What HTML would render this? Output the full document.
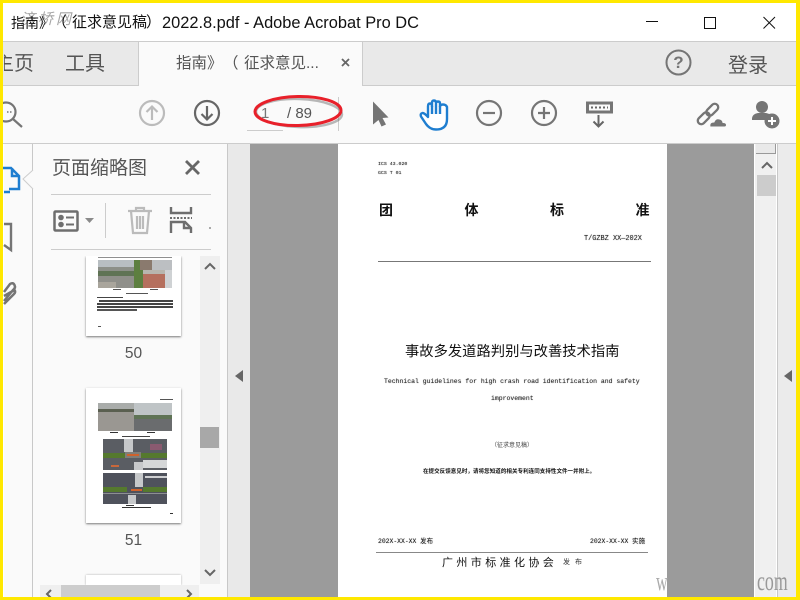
<!DOCTYPE html>
<html><head><meta charset="utf-8"><style>
html,body{margin:0;padding:0}
body{width:800px;height:600px;overflow:hidden;position:relative;background:#fff;font-family:"Liberation Sans","Noto Sans CJK SC",sans-serif}
div,span{position:absolute;white-space:nowrap}
svg{position:absolute;overflow:visible}
.d{font-family:"Liberation Mono","Noto Sans CJK SC",monospace;color:#222;text-shadow:0 0 1px rgba(0,0,0,.35)}
.c{font-family:"Noto Sans CJK SC",sans-serif;color:#111}
.b{background:#111;opacity:.75;height:1px}
</style></head><body>
<div style="left:0;top:41px;width:800px;height:1px;background:#ccc"></div>
<div style="left:0;top:42px;width:800px;height:43px;background:#e9e9e9"></div>
<div style="left:0;top:85px;width:800px;height:1px;background:#ccc"></div>
<div style="left:138px;top:42px;width:225px;height:44px;background:#fafafa;border-left:1px solid #ccc;border-right:1px solid #ccc;box-sizing:border-box"></div>
<div style="left:0;top:86px;width:800px;height:57px;background:#fafafa"></div>
<div style="left:0;top:143px;width:800px;height:1px;background:#ccc"></div>

<div style="left:20px;top:10px;font-size:15px;line-height:20px;color:#888;opacity:.75;letter-spacing:3px;font-style:italic">济桥网</div>
<div style="left:11px;top:13px;font-size:14px;line-height:20px;color:#111">指南》</div>
<div style="left:52px;top:13px;font-size:15px;line-height:20px;color:#111">（</div>
<div style="left:72px;top:13px;font-size:15px;line-height:20px;color:#111">征求意见稿</div>
<div style="left:146px;top:13px;font-size:15px;line-height:20px;color:#111">）</div>
<div style="left:162px;top:13px;font-size:16.400px;line-height:20px;color:#111">2022.8.pdf - Adobe Acrobat Pro DC</div>
<svg style="left:640px;top:10px" width="150" height="30" fill="none" stroke="#111" stroke-width="1"><path d="M6 11.500H18M64.500 7.500H75.500V18.500H64.500ZM123.500 7L135 18.500M135 7L123.500 18.500"/></svg>

<div style="left:4px;top:51px;width:30px;overflow:hidden;font-size:20px;line-height:26px;color:#555"><span style="position:static;margin-left:-10px">主页</span></div>
<div style="left:65px;top:51px;font-size:20px;line-height:26px;color:#555">工具</div>
<div style="left:176px;top:52px;font-size:15.500px;line-height:24px;color:#555">指南》</div>
<div style="left:223px;top:52px;font-size:15.500px;line-height:24px;color:#555">（</div>
<div style="left:244px;top:52px;font-size:15.500px;line-height:24px;color:#555">征求意见...</div>
<svg style="left:341px;top:58px" width="10" height="10" stroke="#666" stroke-width="1.800"><path d="M1 1L8 8M8 1L1 8"/></svg>
<svg style="left:665px;top:49px" width="28" height="28" fill="none" stroke="#757575" stroke-width="2"><circle cx="13.500" cy="13.500" r="12"/></svg>
<div style="left:665px;top:50px;width:27px;text-align:center;font-size:17px;font-weight:bold;color:#757575;line-height:26px">?</div>
<div style="left:728px;top:53px;font-size:20px;line-height:26px;color:#555">登录</div>

<!-- toolbar -->
<svg style="left:4px;top:100px" width="20" height="30" fill="none" stroke="#757575" stroke-width="2.200"><circle cx="2" cy="12" r="9.500"/><path d="M9 19L18 27"/><path d="M3 12H9" stroke-dasharray="1.500 1.500" stroke-width="1.500"/></svg>
<svg style="left:139px;top:100px" width="26" height="26" fill="none" stroke="#bbb" stroke-width="2.200"><circle cx="13" cy="13" r="12"/><path d="M13 20V7M7.500 12L13 6.500L18.500 12"/></svg>
<svg style="left:194px;top:100px" width="26" height="26" fill="none" stroke="#666" stroke-width="2.200"><circle cx="13" cy="13" r="12"/><path d="M13 6V19M7.500 14L13 19.500L18.500 14"/></svg>
<div style="left:247px;top:130px;width:36px;height:1px;background:#ccc"></div>
<div style="left:338px;top:97px;width:1px;height:34px;background:#ccc"></div>
<div style="left:261px;top:105px;font-size:15px;line-height:18px;color:#777">1</div>
<div style="left:287px;top:105px;font-size:15px;line-height:18px;color:#555">/ 89</div>
<svg style="left:0;top:0" width="400" height="140" fill="none"><ellipse cx="299" cy="113" rx="43" ry="14" stroke="#666" stroke-width="2.500" opacity=".45" transform="rotate(2 299 113)"/><ellipse cx="298" cy="111" rx="43" ry="14.500" stroke="#e8202a" stroke-width="3" transform="rotate(-1 298 111)"/></svg>
<svg style="left:370px;top:100px" width="20" height="28" fill="#757575"><path d="M3 1.500L18.500 17.500L12.500 18L16 24.500L11.500 26.500L8.500 20L3 24.500Z"/></svg>
<svg style="left:419px;top:99px" width="30" height="33" fill="#fff" stroke="#1f7ed0" stroke-width="2.400" stroke-linejoin="round"><path d="M9 18V7.500Q9 4.500 11 4.500T13 7.500V4Q13 1.500 15 1.500T17 4V4.500Q17 2.500 19 2.500T21 4.500V7.500Q21 5.500 24 5.500T28 8V20Q28 30.500 17 30.500Q11 30.500 7 25L2 17.500Q1 14.500 3.500 14Q5.500 14 9 18Z"/><path d="M13 7V15M17 5V15M21 7V15" fill="none"/></svg>
<svg style="left:476px;top:100px" width="26" height="26" fill="none" stroke="#757575" stroke-width="2.200"><circle cx="13" cy="13" r="12"/><path d="M7 13H19"/></svg>
<svg style="left:531px;top:100px" width="26" height="26" fill="none" stroke="#757575" stroke-width="2.200"><circle cx="13" cy="13" r="12"/><path d="M7 13H19M13 7V19"/></svg>
<svg style="left:585px;top:100px" width="28" height="28" fill="none"><rect x="2.500" y="3" width="24" height="9" stroke="#757575" stroke-width="3"/><path d="M6 7.500H23" stroke="#666" stroke-width="2" stroke-dasharray="2 2"/><path d="M13.500 15V26.500M8.500 21.500L13.500 26.500L18.500 21.500" stroke="#666" stroke-width="2"/></svg>
<svg style="left:695px;top:101px" width="32" height="28" fill="none" stroke="#757575" stroke-width="2.300"><g transform="rotate(-45 13 13)"><rect x="0" y="9.500" width="14" height="7" rx="3.500"/><rect x="12" y="9.500" width="14" height="7" rx="3.500"/></g><path d="M15 26Q14 21 19 21Q20.500 17 24.500 18Q27.500 18.500 28 21.500Q31.500 21.500 31.500 24Q31.500 26 29.500 26Z" fill="#757575" stroke="#fafafa" stroke-width="1"/></svg>
<svg style="left:751px;top:100px" width="32" height="30" fill="#757575"><circle cx="11" cy="7" r="6"/><path d="M1 19Q1 14 7 13H15Q20 14 21 17Q17 17.500 16 20H1Z"/><circle cx="21" cy="21" r="7.500"/><path d="M17 21H25M21 17V25" stroke="#fff" stroke-width="2"/></svg>

<!-- left rail -->
<div style="left:4px;top:144px;width:28px;height:456px;background:#fafafa"></div>
<div style="left:32px;top:144px;width:1px;height:456px;background:#c8c8c8"></div>
<svg style="left:4px;top:166px" width="14" height="30" fill="none" stroke="#1f7ed0" stroke-width="2.500"><path d="M-2 2H7L15 10V23H5M8 2V10H15"/><path d="M0 26H6" /></svg>
<svg style="left:4px;top:222px" width="14" height="34" fill="none" stroke="#757575" stroke-width="2.400"><path d="M0 2H7V28L0 23"/></svg>
<svg style="left:4px;top:280px" width="14" height="26" fill="none" stroke="#757575" stroke-width="2.500"><path d="M0 12L6 4Q9 2 10.500 5Q12 8 9 10L0 21M0 16L10.500 10Q12 12 10 14L0 24"/></svg>

<!-- panel -->
<div style="left:33px;top:144px;width:194px;height:456px;background:#fafafa"></div>
<svg style="left:22px;top:170px" width="12" height="22" fill="#fafafa" stroke="#ccc"><path d="M11 0L1 9L11 19" /></svg>
<div style="left:227px;top:144px;width:1px;height:456px;background:#c8c8c8"></div>
<div style="left:228px;top:144px;width:22px;height:456px;background:#e9e9e9"></div>
<div style="left:52px;top:156px;font-size:19px;line-height:26px;letter-spacing:0;color:#555">页面缩略图</div>
<svg style="left:184px;top:159px" width="17" height="17" stroke="#666" stroke-width="2.800"><path d="M2 2L15 15M15 2L2 15"/></svg>
<div style="left:51px;top:194px;width:160px;height:1px;background:#ccc"></div>
<div style="left:51px;top:249px;width:160px;height:1px;background:#ccc"></div>
<svg style="left:53px;top:210px" width="26" height="22" fill="none" stroke="#6e6e6e" stroke-width="2.500"><rect x="1.500" y="1.500" width="23" height="19" rx="1"/><circle cx="8" cy="7.500" r="2.800" fill="#6e6e6e" stroke="none"/><circle cx="8" cy="14.500" r="2.800" fill="#6e6e6e" stroke="none"/><path d="M13 7.500H21M13 14.500H21" stroke-width="2"/></svg>
<svg style="left:85px;top:218px" width="9" height="6" fill="#8a8a8a"><path d="M0 0H9L4.500 5Z"/></svg>
<div style="left:105px;top:203px;width:1px;height:35px;background:#ccc"></div>
<svg style="left:127px;top:206px" width="26" height="29" fill="none" stroke="#bbb" stroke-width="2.200"><path d="M1 5H25M9 5V2H17V5M4 5L6 27H20L22 5M10 10V23M13 10V23M16 10V23"/></svg>
<svg style="left:169px;top:207px" width="24" height="27" fill="none" stroke="#6e6e6e" stroke-width="2.400"><path d="M2 0V6H22V0M2 26V15H16L22 21V26"/><path d="M1 11H23" stroke-dasharray="2 1.500" stroke-width="2"/><path d="M15 15V21H22" /></svg>
<div style="left:209px;top:227px;width:2px;height:2px;background:#aaa"></div>

<!-- thumbnail list -->
<div style="left:86px;top:256px;width:95px;height:80px;background:#fff;box-shadow:0 1px 2px #777"></div>
<div style="left:80px;top:250px;width:106px;height:6px;background:#fafafa"></div>
<div style="left:86px;top:388px;width:95px;height:135px;background:#fff;box-shadow:0 1px 2px #777"></div>
<svg style="left:0;top:0" width="240" height="600" shape-rendering="crispEdges">
<!-- page 50 -->
<rect x="98" y="257" width="74" height="1" fill="#444" opacity=".6"/>
<rect x="98" y="260" width="36" height="12" fill="#b8bec2"/>
<rect x="98" y="267" width="36" height="4" fill="#8c8f88"/>
<rect x="98" y="271" width="36" height="5" fill="#5f7355"/>
<rect x="98" y="276" width="36" height="12" fill="#8f8f8a"/>
<rect x="98" y="282" width="18" height="6" fill="#a9a59c"/>
<rect x="134" y="260" width="38" height="28" fill="#b8b6ae"/>
<rect x="134" y="260" width="9" height="28" fill="#5d7f40"/>
<rect x="140" y="260" width="12" height="10" fill="#8a7a6e"/>
<rect x="143" y="274" width="22" height="14" fill="#b5705e"/>
<rect x="165" y="270" width="7" height="18" fill="#cfd2d4"/>
<rect x="152" y="260" width="20" height="10" fill="#bcbfc2"/>
<rect x="113" y="289" width="8" height="1" fill="#555"/>
<rect x="150" y="289" width="8" height="1" fill="#555"/>
<rect x="126" y="293" width="22" height="1" fill="#555"/>
<rect x="97" y="297" width="26" height="1" fill="#444"/>
<rect x="99" y="300" width="74" height="2" fill="#444"/>
<rect x="97" y="303" width="76" height="2" fill="#444"/>
<rect x="97" y="306" width="76" height="2" fill="#444"/>
<rect x="97" y="309" width="40" height="2" fill="#555"/>
<rect x="98" y="326" width="3" height="1" fill="#555"/>
<!-- page 51 -->
<rect x="160" y="399" width="13" height="1" fill="#555"/>
<rect x="98" y="403" width="36" height="8" fill="#a9acaa"/>
<rect x="98" y="409" width="36" height="3" fill="#5a5f50"/>
<rect x="98" y="412" width="36" height="19" fill="#9a9792"/>
<rect x="134" y="403" width="38" height="12" fill="#bfc4c6"/>
<rect x="134" y="415" width="38" height="4" fill="#5f7355"/>
<rect x="134" y="419" width="38" height="12" fill="#6a6c6e"/>
<rect x="110" y="432" width="8" height="1" fill="#333"/>
<rect x="147" y="432" width="8" height="1" fill="#333"/>
<rect x="122" y="436" width="28" height="1" fill="#444"/>
<!-- aerial 1 -->
<rect x="103" y="439" width="64" height="31" fill="#5a5d63"/>
<rect x="124" y="439" width="9" height="13" fill="#c6c8ca"/>
<rect x="103" y="453" width="22" height="5" fill="#55792e"/>
<rect x="141" y="453" width="26" height="5" fill="#55792e"/>
<rect x="125" y="452" width="16" height="6" fill="#807e78"/>
<rect x="134" y="462" width="9" height="8" fill="#c6c8ca"/>
<rect x="143" y="460" width="24" height="8" fill="#d5d7d8"/>
<rect x="127" y="454" width="12" height="2" fill="#d0622c"/>
<rect x="111" y="465" width="8" height="2" fill="#c9683c"/>
<rect x="150" y="444" width="12" height="6" fill="#8a5a70"/>
<!-- aerial 2 -->
<rect x="103" y="473" width="64" height="31" fill="#4f525c"/>
<rect x="135" y="473" width="8" height="14" fill="#c6c8ca"/>
<rect x="145" y="476" width="22" height="2" fill="#cfd0d2"/>
<rect x="103" y="487" width="24" height="5" fill="#55792e"/>
<rect x="143" y="487" width="24" height="5" fill="#55792e"/>
<rect x="131" y="489" width="11" height="2" fill="#d0622c"/>
<rect x="128" y="495" width="8" height="9" fill="#c6c8ca"/>
<rect x="103" y="493" width="64" height="1" fill="#8d8f92"/>
<rect x="126" y="505" width="8" height="1" fill="#333"/>
<rect x="122" y="507" width="29" height="1" fill="#333"/>
<rect x="170" y="513" width="3" height="1" fill="#333"/>
</svg>
<div style="left:86px;top:345px;width:95px;text-align:center;font-size:15.500px;line-height:18px;color:#555">50</div>
<div style="left:86px;top:532px;width:95px;text-align:center;font-size:15.500px;line-height:18px;color:#555">51</div>
<div style="left:86px;top:575px;width:95px;height:10px;background:#fff;box-shadow:0 0 2px #aaa"></div>

<!-- panel scrollbars -->
<div style="left:200px;top:256px;width:20px;height:328px;background:#efefef"></div>
<div style="left:200px;top:427px;width:19px;height:21px;background:#a8a8a8"></div>
<svg style="left:204px;top:262px" width="12" height="8" fill="none" stroke="#666" stroke-width="2"><path d="M1 7L6 2L11 7"/></svg>
<svg style="left:204px;top:569px" width="12" height="8" fill="none" stroke="#666" stroke-width="2"><path d="M1 1L6 6L11 1"/></svg>
<div style="left:40px;top:585px;width:159px;height:12px;background:#efefef"></div>
<div style="left:61px;top:585px;width:99px;height:12px;background:#cdcdcd"></div>
<svg style="left:45px;top:590px" width="8" height="10" fill="none" stroke="#666" stroke-width="2"><path d="M6 0L2 4L6 8"/></svg>
<svg style="left:185px;top:590px" width="8" height="10" fill="none" stroke="#666" stroke-width="2"><path d="M2 0L6 4L2 8"/></svg>
<svg style="left:235px;top:370px" width="9" height="13" fill="#666"><path d="M8 0V12L0 6Z"/></svg>

<!-- document -->
<div style="left:250px;top:144px;width:504px;height:456px;background:#9b9b9b"></div>
<div style="left:338px;top:144px;width:329px;height:456px;background:#fff"></div>
<div class="d" style="left:378px;top:161px;font-size:4.900px;line-height:7px">ICS 43.020</div>
<div class="d" style="left:378px;top:170px;font-size:4.900px;line-height:7px">GCS T 01</div>
<div class="c" style="left:379px;top:202px;font-size:14px;line-height:16px;font-weight:bold">团</div>
<div class="c" style="left:464.500px;top:202px;font-size:14px;line-height:16px;font-weight:bold">体</div>
<div class="c" style="left:550px;top:202px;font-size:14px;line-height:16px;font-weight:bold">标</div>
<div class="c" style="left:635.500px;top:202px;font-size:14px;line-height:16px;font-weight:bold">准</div>
<div class="d" style="left:584px;top:235px;font-size:6.900px;line-height:9px">T/GZBZ XX—202X</div>
<div style="left:378px;top:261px;width:273px;height:1px;background:#777"></div>
<div class="c" style="left:405px;top:342px;font-size:14.300px;line-height:18px">事故多发道路判别与改善技术指南</div>
<div class="d" style="left:384px;top:377px;font-size:6.460px;line-height:10px;color:#222">Technical guidelines for high crash road identification and safety</div>
<div class="d" style="left:491px;top:394px;font-size:6.460px;line-height:10px;color:#222">improvement</div>
<div class="c" style="left:491px;top:440px;font-size:6px;line-height:9px;color:#444">（征求意见稿）</div>
<div class="c" style="left:423px;top:467px;font-size:5.500px;line-height:9px;letter-spacing:.06px;color:#111;font-weight:bold">在提交反馈意见时，请将您知道的相关专利连同支持性文件一并附上。</div>
<div class="d" style="left:378px;top:537px;font-size:6.400px;line-height:10px;color:#111">202X-XX-XX 发布</div>
<div class="d" style="left:590px;top:537px;font-size:6.400px;line-height:10px;color:#111">202X-XX-XX 实施</div>
<div style="left:376px;top:552px;width:272px;height:1px;background:#888"></div>
<div class="c" style="left:442px;top:555px;font-size:11px;line-height:14px;letter-spacing:3.400px">广州市标准化协会</div>
<div class="c" style="left:563px;top:556px;font-size:7px;line-height:12px;letter-spacing:5px;color:#333">发布</div>

<!-- right scrollbar -->
<div style="left:754px;top:144px;width:22px;height:456px;background:#f0f0f0;border-left:1px solid #fff;box-sizing:border-box"></div>
<div style="left:756px;top:144px;width:20px;height:10px;background:#e9e9e9;border-right:1px solid #999;border-bottom:1px solid #999;box-sizing:border-box"></div>
<div style="left:757px;top:175px;width:19px;height:21px;background:#cccccc"></div>
<svg style="left:761px;top:161px" width="12" height="8" fill="none" stroke="#666" stroke-width="2"><path d="M1 7L6 2L11 7"/></svg>
<div style="left:777px;top:144px;width:1px;height:456px;background:#c8c8c8"></div>
<div style="left:778px;top:144px;width:18px;height:456px;background:#ebebeb"></div>
<svg style="left:784px;top:370px" width="9" height="13" fill="#666"><path d="M8 0V12L0 6Z"/></svg>

<!-- watermark -->
<div style="left:656px;top:568px;font-family:'Liberation Serif',serif;font-size:26px;line-height:28px;color:#aaa;transform:scaleX(.62);transform-origin:left">w</div>
<div style="left:757px;top:566px;font-family:'Liberation Serif',serif;font-size:27px;line-height:30px;color:#999;transform:scaleX(.66);transform-origin:left">com</div>

<!-- yellow frame -->
<div style="left:0;top:0;width:800px;height:3px;background:#ffe800"></div>
<div style="left:0;top:0;width:3px;height:600px;background:#ffe800"></div>
<div style="left:796px;top:0;width:4px;height:600px;background:#ffe800"></div>
<div style="left:0;top:597px;width:800px;height:3px;background:#ffe800"></div>
</body></html>
